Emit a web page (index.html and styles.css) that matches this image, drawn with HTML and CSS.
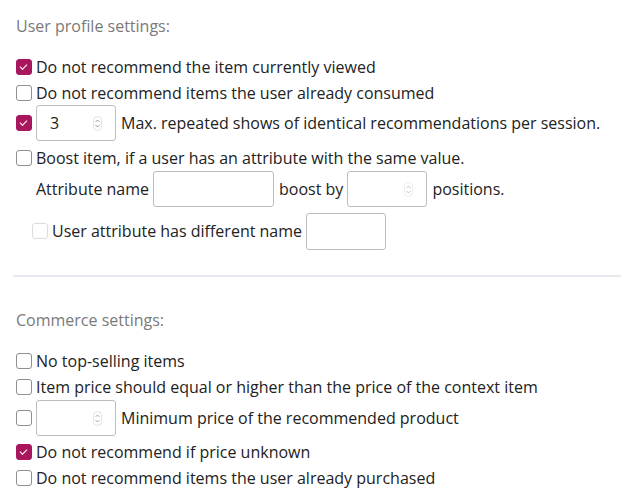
FILE: index.html
```html
<!DOCTYPE html>
<html>
<head>
<meta charset="utf-8">
<link rel="stylesheet" href="styles.css">
</head>
<body>
<div class="page">
  <div class="section-title first">User profile settings:</div>
  <div class="row r1"><span class="cb on"></span><span>Do not recommend the item currently viewed</span></div>
  <div class="row"><span class="cb"></span><span>Do not recommend items the user already consumed</span></div>
  <div class="row tall r3"><span class="cb on"></span><span class="inp num w80"><span class="val">3</span><span class="spin"><svg width="9" height="15" viewBox="0 0 9 15"><rect x="0.5" y="0.5" width="8" height="14" rx="4" fill="none" stroke="#e3e3e3"/><path d="M2.5 6 L4.5 4 L6.5 6" fill="none" stroke="#9a9a9a" stroke-width="1"/><path d="M2.5 9 L4.5 11 L6.5 9" fill="none" stroke="#9a9a9a" stroke-width="1"/></svg></span></span><span class="lbl">Max. repeated shows of identical recommendations per session.</span></div>
  <div class="row r4"><span class="cb"></span><span>Boost item, if a user has an attribute with the same value.</span></div>
  <div class="row tall indent"><span>Attribute name</span><span class="inp w120 ml4"></span><span class="ml6">boost by</span><span class="inp num w80 ml4"><span class="spin faint"><svg width="9" height="15" viewBox="0 0 9 15"><rect x="0.5" y="0.5" width="8" height="14" rx="4" fill="none" stroke="#ececec"/><path d="M2.5 6 L4.5 4 L6.5 6" fill="none" stroke="#c4c4c4" stroke-width="1"/><path d="M2.5 9 L4.5 11 L6.5 9" fill="none" stroke="#c4c4c4" stroke-width="1"/></svg></span></span><span class="ml5">positions.</span></div>
  <div class="row tall indent2 r6"><span class="cb dis"></span><span>User attribute has different name</span><span class="inp w80 ml4"></span></div>
  <div class="divider"></div>
  <div class="section-title second">Commerce settings:</div>
  <div class="row r1c"><span class="cb"></span><span>No top-selling items</span></div>
  <div class="row"><span class="cb"></span><span>Item price should equal or higher than the price of the context item</span></div>
  <div class="row tall"><span class="cb"></span><span class="inp num w80"><span class="spin"><svg width="9" height="15" viewBox="0 0 9 15"><rect x="0.5" y="0.5" width="8" height="14" rx="4" fill="none" stroke="#e3e3e3"/><path d="M2.5 6 L4.5 4 L6.5 6" fill="none" stroke="#a8a8a8" stroke-width="1"/><path d="M2.5 9 L4.5 11 L6.5 9" fill="none" stroke="#a8a8a8" stroke-width="1"/></svg></span></span><span class="lbl">Minimum price of the recommended product</span></div>
  <div class="row rafter"><span class="cb on"></span><span>Do not recommend if price unknown</span></div>
  <div class="row"><span class="cb"></span><span>Do not recommend items the user already purchased</span></div>
</div>
</body>
</html>
```
FILE: styles.css
```css
html, body {
  margin: 0;
  padding: 0;
  background: #fff;
}
.page {
  padding: 0 0 0 16px;
  font-family: "Open Sans", "Noto Sans", sans-serif;
  font-size: 16px;
  color: #222;
}
.section-title {
  color: #7a7a7a;
  line-height: 24px;
}
.section-title.first { padding-top: 14px; }
.section-title.second { padding-top: 31px; }
.row {
  display: flex;
  align-items: center;
  height: 26px;
  white-space: nowrap;
}
.row.tall { height: 36px; }
.r1 { margin-top: 16px; }
.r3 { margin-top: -1px; }
.r4 { margin-top: 4px; }
.r6 { margin-top: 6px; height: 37px; }
.r1c { margin-top: 16px; }
.rafter { margin-top: 3px; }
.indent { padding-left: 20px; }
.indent2 { padding-left: 16px; }
.cb {
  box-sizing: border-box;
  width: 16px;
  height: 16px;
  border: 1px solid #8e8e93;
  border-radius: 3px;
  margin-right: 4px;
  flex: none;
  position: relative;
  background: #fff;
}
.cb.on {
  background: #a8175d;
  border-color: #a8175d;
}
.cb.on::after {
  content: "";
  position: absolute;
  width: 6px;
  height: 3px;
  border-left: 1.5px solid #fff;
  border-bottom: 1.5px solid #fff;
  transform: rotate(-45deg);
  transform-origin: center;
  top: 4px;
  left: 3px;
}
.cb.dis {
  border-color: #dcdcdc;
}
.inp {
  box-sizing: border-box;
  height: 36px;
  border: 1px solid #bdbdbd;
  border-radius: 3px;
  position: relative;
  display: flex;
  align-items: center;
  flex: none;
  background: #fff;
}
.r6 .inp { height: 37px; }
.w80 { width: 80px; }
.w120 { width: 121px; }
.ml4 { margin-left: 4px; }
.ml5 { margin-left: 5px; }
.ml6 { margin-left: 5px; }
.val { padding-left: 13px; }
.spin {
  position: absolute;
  right: 13px;
  top: 10px;
  width: 9px;
  height: 15px;
  display: block;
}
.spin svg { display: block; }
.lbl { margin-left: 5px; }
.divider {
  margin-top: 26px;
  margin-left: -3px;
  height: 2px;
  background: #e8e8ee;
}
```
